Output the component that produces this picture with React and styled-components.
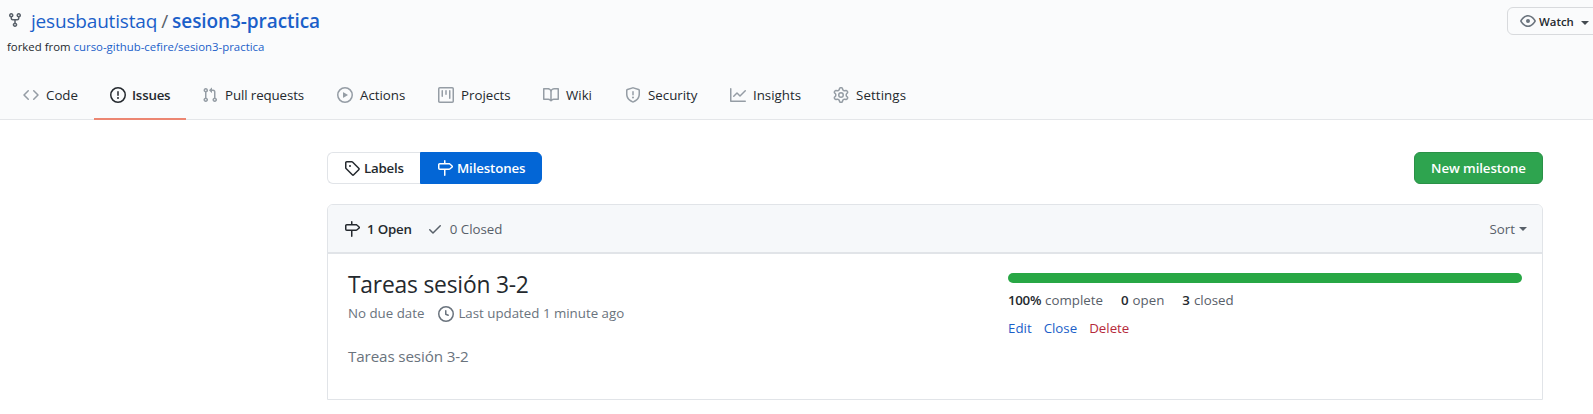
import React from "react";
import styled, { createGlobalStyle } from "styled-components";

const GlobalStyle = createGlobalStyle`
  *, *::before, *::after { box-sizing: border-box; }
  body {
    margin: 0;
    background: #fff;
    color: #24292e;
    font-family: "Open Sans", "Noto Sans", sans-serif;
    font-size: 13.3px;
    overflow: hidden;
  }
`;

const ICONS = {
  fork: "M5 3.25a.75.75 0 11-1.5 0 .75.75 0 011.5 0zm0 2.122a2.25 2.25 0 10-1.5 0v.878A2.25 2.25 0 005.75 8.5h1.5v2.128a2.251 2.251 0 101.5 0V8.5h1.5a2.25 2.25 0 002.25-2.25v-.878a2.25 2.25 0 10-1.5 0v.878a.75.75 0 01-.75.75h-4.5A.75.75 0 015 6.25v-.878zm3.75 7.378a.75.75 0 11-1.5 0 .75.75 0 011.5 0zm3-8.75a.75.75 0 100-1.5.75.75 0 000 1.5z",
  code: "M4.72 3.22a.75.75 0 011.06 1.06L2.06 8l3.72 3.72a.75.75 0 11-1.06 1.06L.47 8.53a.75.75 0 010-1.06l4.25-4.25zm6.56 0a.75.75 0 10-1.06 1.06L13.94 8l-3.72 3.72a.75.75 0 101.06 1.06l4.25-4.25a.75.75 0 000-1.06l-4.25-4.25z",
  issue: "M8 1.5a6.5 6.5 0 100 13 6.5 6.5 0 000-13zM0 8a8 8 0 1116 0A8 8 0 010 8zm9 3a1 1 0 11-2 0 1 1 0 012 0zm-.25-6.25a.75.75 0 00-1.5 0v3.5a.75.75 0 001.5 0v-3.5z",
  pull: "M7.177 3.073L9.573.677A.25.25 0 0110 .854v4.792a.25.25 0 01-.427.177L7.177 3.427a.25.25 0 010-.354zM3.75 2.5a.75.75 0 100 1.5.75.75 0 000-1.5zm-2.25.75a2.25 2.25 0 113 2.122v5.256a2.251 2.251 0 11-1.5 0V5.372A2.25 2.25 0 011.5 3.25zM11 2.5h-1V4h1a1 1 0 011 1v5.628a2.251 2.251 0 101.5 0V5A2.5 2.5 0 0011 2.5zm1 10.25a.75.75 0 111.5 0 .75.75 0 01-1.5 0zM3.75 12a.75.75 0 100 1.5.75.75 0 000-1.5z",
  play: "M1.5 8a6.5 6.5 0 1113 0 6.5 6.5 0 01-13 0zM8 0a8 8 0 100 16A8 8 0 008 0zM6.379 5.227A.25.25 0 006 5.442v5.117a.25.25 0 00.379.214l4.264-2.559a.25.25 0 000-.428L6.379 5.227z",
  project: "M1.75 0A1.75 1.75 0 000 1.75v12.5C0 15.216.784 16 1.75 16h12.5A1.75 1.75 0 0016 14.25V1.75A1.75 1.75 0 0014.25 0H1.75zM1.5 1.75a.25.25 0 01.25-.25h12.5a.25.25 0 01.25.25v12.5a.25.25 0 01-.25.25H1.75a.25.25 0 01-.25-.25V1.75zM11.75 3a.75.75 0 00-.75.75v7.5a.75.75 0 001.5 0v-7.5a.75.75 0 00-.75-.75zm-8.25.75a.75.75 0 011.5 0v5.5a.75.75 0 01-1.5 0v-5.5zM8 3a.75.75 0 00-.75.75v3.5a.75.75 0 001.5 0v-3.5A.75.75 0 008 3z",
  book: "M0 1.75A.75.75 0 01.75 1h4.253c1.227 0 2.317.59 3 1.501A3.744 3.744 0 0111.006 1h4.245a.75.75 0 01.75.75v10.5a.75.75 0 01-.75.75h-4.507a2.25 2.25 0 00-1.591.659l-.622.621a.75.75 0 01-1.06 0l-.622-.621A2.25 2.25 0 005.258 13H.75a.75.75 0 01-.75-.75V1.75zm8.755 3a2.25 2.25 0 012.25-2.25H14.5v9h-3.757c-.71 0-1.4.201-1.992.572l.004-7.322zm-1.504 7.324l.004-5.073-.002-2.253A2.25 2.25 0 005.003 2.5H1.5v9h3.757a3.75 3.75 0 011.994.574z",
  shield: "M7.467.133a1.75 1.75 0 011.066 0l5.25 1.68A1.75 1.75 0 0115 3.48V7c0 1.566-.32 3.182-1.303 4.682-.983 1.498-2.585 2.813-5.032 3.855a1.7 1.7 0 01-1.33 0c-2.447-1.042-4.049-2.357-5.032-3.855C1.32 10.182 1 8.566 1 7V3.48a1.75 1.75 0 011.217-1.667l5.25-1.68zm.61 1.429a.25.25 0 00-.153 0l-5.25 1.68a.25.25 0 00-.174.238V7c0 1.358.275 2.666 1.057 3.86.784 1.194 2.121 2.34 4.366 3.297a.2.2 0 00.154 0c2.245-.956 3.582-2.104 4.366-3.298C13.225 9.666 13.5 8.36 13.5 7V3.48a.25.25 0 00-.174-.237l-5.25-1.68zM9 10.5a1 1 0 11-2 0 1 1 0 012 0zm-.25-5.75a.75.75 0 10-1.5 0v3a.75.75 0 001.5 0v-3z",
  graph: "M1.5 1.75a.75.75 0 00-1.5 0v12.5c0 .414.336.75.75.75h14.5a.75.75 0 000-1.5H1.5V1.75zm14.28 2.53a.75.75 0 00-1.06-1.06L10 7.94 7.53 5.47a.75.75 0 00-1.06 0L3.22 8.72a.75.75 0 001.06 1.06L7 7.06l2.47 2.47a.75.75 0 001.06 0l5.25-5.25z",
  gear: "M7.429 1.525a6.593 6.593 0 011.142 0c.036.003.108.036.137.146l.289 1.105c.147.56.55.967.997 1.189.174.086.341.183.501.29.417.278.97.423 1.53.27l1.102-.303c.11-.03.175.016.195.046.219.31.41.641.573.989.014.031.022.11-.059.19l-.815.806c-.411.406-.562.957-.53 1.456a4.588 4.588 0 010 .582c-.032.499.119 1.05.53 1.456l.815.806c.08.08.073.159.059.19a6.494 6.494 0 01-.573.99c-.02.029-.086.074-.195.045l-1.103-.303c-.559-.153-1.112-.008-1.529.27-.16.107-.327.204-.5.29-.449.222-.851.628-.998 1.189l-.289 1.105c-.029.11-.101.143-.137.146a6.613 6.613 0 01-1.142 0c-.036-.003-.108-.037-.137-.146l-.289-1.105c-.147-.56-.55-.967-.997-1.189a4.502 4.502 0 01-.501-.29c-.417-.278-.97-.423-1.53-.27l-1.102.303c-.11.03-.175-.016-.195-.046a6.492 6.492 0 01-.573-.989c-.014-.031-.022-.11.059-.19l.815-.806c.411-.406.562-.957.53-1.456a4.587 4.587 0 010-.582c.032-.499-.119-1.05-.53-1.456l-.815-.806c-.08-.08-.073-.159-.059-.19a6.44 6.44 0 01.573-.99c.02-.029.086-.075.195-.045l1.103.303c.559.153 1.112.008 1.529-.27.16-.107.327-.204.5-.29.449-.222.851-.628.998-1.189l.289-1.105c.029-.11.101-.143.137-.146zM8 0c-.236 0-.47.01-.701.03-.743.065-1.29.615-1.458 1.261l-.29 1.106c-.017.066-.078.158-.211.224a5.994 5.994 0 00-.668.386c-.123.082-.233.09-.3.071L3.27 2.776c-.644-.177-1.392.02-1.82.63a7.977 7.977 0 00-.704 1.217c-.315.675-.111 1.422.363 1.891l.815.806c.05.048.098.147.088.294a6.084 6.084 0 000 .772c.01.147-.038.246-.088.294l-.815.806c-.474.469-.678 1.216-.363 1.891.2.428.436.835.704 1.218.428.609 1.176.806 1.82.63l1.103-.303c.066-.019.176-.011.299.071.213.143.436.272.668.386.133.066.194.158.212.224l.289 1.106c.169.646.715 1.196 1.458 1.26a8.094 8.094 0 001.402 0c.743-.064 1.29-.614 1.458-1.26l.29-1.106c.017-.066.078-.158.211-.224a5.98 5.98 0 00.668-.386c.123-.082.233-.09.3-.071l1.102.302c.644.177 1.392-.02 1.82-.63.268-.382.505-.789.704-1.217.315-.675.111-1.422-.364-1.891l-.814-.806c-.05-.048-.098-.147-.088-.294a6.1 6.1 0 000-.772c-.01-.147.039-.246.088-.294l.814-.806c.475-.469.679-1.216.364-1.891a7.992 7.992 0 00-.704-1.218c-.428-.609-1.176-.806-1.82-.63l-1.103.303c-.066.019-.176.011-.299-.071a5.991 5.991 0 00-.668-.386c-.133-.066-.194-.158-.212-.224L10.16 1.29C9.99.645 9.444.095 8.701.031A8.094 8.094 0 008 0zm1.5 8a1.5 1.5 0 11-3 0 1.5 1.5 0 013 0zM11 8a3 3 0 11-6 0 3 3 0 016 0z",
  tag: "M2.5 7.775V2.75a.25.25 0 01.25-.25h5.025a.25.25 0 01.177.073l6.25 6.25a.25.25 0 010 .354l-5.025 5.025a.25.25 0 01-.354 0l-6.25-6.25a.25.25 0 01-.073-.177zm-1.5 0V2.75C1 1.784 1.784 1 2.75 1h5.025c.464 0 .91.184 1.238.513l6.25 6.25a1.75 1.75 0 010 2.474l-5.026 5.026a1.75 1.75 0 01-2.474 0l-6.25-6.25A1.75 1.75 0 011 7.775zM6 5a1 1 0 100 2 1 1 0 000-2z",
  milestone: "M7.75 0a.75.75 0 01.75.75V3h3.634c.414 0 .814.147 1.13.414l2.07 1.75a1.75 1.75 0 010 2.672l-2.07 1.75a1.75 1.75 0 01-1.13.414H8.5v5.25a.75.75 0 11-1.5 0V10H2.75A1.75 1.75 0 011 8.25v-3.5C1 3.784 1.784 3 2.75 3H7V.75A.75.75 0 017.75 0zm0 8.5h4.384a.25.25 0 00.161-.06l2.07-1.75a.25.25 0 000-.38l-2.07-1.75a.25.25 0 00-.161-.06H2.75a.25.25 0 00-.25.25v3.5c0 .138.112.25.25.25h5z",
  check: "M13.78 4.22a.75.75 0 010 1.06l-7.25 7.25a.75.75 0 01-1.06 0L2.22 9.28a.75.75 0 011.06-1.06L6 10.94l6.72-6.72a.75.75 0 011.06 0z",
  clock: "M1.5 8a6.5 6.5 0 1113 0 6.5 6.5 0 01-13 0zM8 0a8 8 0 100 16A8 8 0 008 0zm.5 4.75a.75.75 0 00-1.5 0v3.5a.75.75 0 00.471.696l2.5 1a.75.75 0 00.557-1.392L8.5 7.742V4.75z",
  eye: "M1.679 7.932c.412-.621 1.242-1.75 2.366-2.717C5.175 4.242 6.527 3.5 8 3.5c1.473 0 2.824.742 3.955 1.715 1.124.967 1.954 2.096 2.366 2.717a.119.119 0 010 .136c-.412.621-1.242 1.75-2.366 2.717C10.825 11.758 9.473 12.5 8 12.5c-1.473 0-2.824-.742-3.955-1.715C2.92 9.818 2.09 8.69 1.679 8.068a.119.119 0 010-.136zM8 2c-1.981 0-3.67.992-4.933 2.078C1.797 5.169.88 6.423.43 7.1a1.619 1.619 0 000 1.798c.45.678 1.367 1.932 2.637 3.024C4.329 13.008 6.019 14 8 14c1.981 0 3.67-.992 4.933-2.078 1.27-1.091 2.187-2.345 2.637-3.023a1.619 1.619 0 000-1.798c-.45-.678-1.367-1.932-2.637-3.023C11.671 2.992 9.981 2 8 2zm0 8a2 2 0 100-4 2 2 0 000 4z",
};

const Svg = styled.svg`
  flex: none;
  width: 16px;
  height: 16px;
  fill: ${(p) => p.$color || "currentColor"};
`;

const Icon = ({ name, color }) => (
  <Svg viewBox="0 0 16 16" $color={color} aria-hidden="true">
    <path fillRule="evenodd" d={ICONS[name]} />
  </Svg>
);

/* $track is the letter spacing, in px */
const Text = styled.span`
  white-space: nowrap;
  letter-spacing: ${(p) => p.$track || 0}px;
  font-weight: ${(p) => (p.$strong ? 600 : 400)};
`;

const Link = styled(Text).attrs({ as: "a" })`
  color: ${(p) => (p.$danger ? "#b5293a" : "#1b5fc9")};
  text-decoration: none;
`;

const Caret = styled.i`
  width: 0;
  height: 0;
  border: 4px solid transparent;
  border-top-color: currentColor;
  border-bottom-width: 0;
`;

const Header = styled.header`
  height: 120px;
  padding-top: 6px;
  background: #fafbfc;
  box-shadow: inset 0 -1px #e4e6e9;
`;

const HeaderTop = styled.div`
  display: flex;
  justify-content: space-between;
  height: 65px;
  padding-left: 7px;
`;

const RepoTitle = styled.h1`
  display: flex;
  align-items: center;
  height: 30px;
  margin: 0;
  font-size: 19px;
  line-height: 30px;
  svg { margin: 0 8px 3px 0; }
`;

const Slash = styled.span`
  margin: 0 4px;
  color: #586069;
  font-weight: 400;
`;

const ForkNote = styled.div`
  display: flex;
  gap: 3px;
  margin-top: 2px;
  font-size: 11.4px;
  line-height: 18px;
`;

const WatchButton = styled.button`
  display: flex;
  align-items: center;
  width: 94px;
  height: 28px;
  margin: 1px -8px 0 0;
  padding: 0 0 0 12px;
  border: 1px solid #d8dadd;
  border-radius: 6px;
  background: #fafbfc;
  color: #24292e;
  font: inherit;
  font-size: 11.4px;
  span { margin: 0 7px 0 3px; }
  i { margin-top: 3px; color: #444a50; }
`;

const Nav = styled.nav`
  display: flex;
  height: 49px;
  padding-left: 7px;
`;

const Tab = styled.a`
  display: flex;
  align-items: center;
  gap: ${(p) => (p.$active ? 6 : 7)}px;
  width: ${(p) => p.$width}px;
  padding: 1px 0 0 16px;
  border-bottom: 2px solid ${(p) => (p.$active ? "#ec8672" : "transparent")};
`;

const Main = styled.main`
  width: 1216px;
  margin: 32px 0 0 327px;
`;

const Toolbar = styled.div`
  display: flex;
  justify-content: space-between;
  height: 32px;
`;

const Switcher = styled.div`
  display: flex;
`;

const Segment = styled.a`
  display: flex;
  align-items: center;
  gap: 4px;
  width: ${(p) => p.$width}px;
  padding-left: 16px;
  border: 1px solid ${(p) => (p.$active ? "#0366d6" : "#e1e4e8")};
  border-right-width: ${(p) => (p.$active ? 1 : 0)}px;
  border-radius: ${(p) => (p.$active ? "0 6px 6px 0" : "6px 0 0 6px")};
  background: ${(p) => (p.$active ? "#0366d6" : "#fff")};
  color: ${(p) => (p.$active ? "#fff" : "#24292e")};
`;

const NewButton = styled.button`
  width: 129px;
  height: 32px;
  padding: 0;
  border: 1px solid #2a9147;
  border-radius: 6px;
  background: #2ea44f;
  color: #fff;
  font: inherit;
`;

const Box = styled.section`
  height: 196px;
  margin-top: 20px;
  border: 1px solid #e1e4e8;
  border-radius: 6px 6px 0 0;
`;

const BoxHeader = styled.div`
  display: flex;
  align-items: center;
  height: 49px;
  padding: 0 15px 0 16px;
  border-bottom: 2px solid #e1e4e8;
  border-radius: 5px 5px 0 0;
  background: #f6f8fa;
  color: #586069;
`;

const State = styled.a`
  display: flex;
  align-items: center;
  gap: 7px;
  margin-right: 15px;
  color: ${(p) => (p.$active ? "#24292e" : "#586069")};
`;

const Sort = styled.a`
  display: flex;
  align-items: center;
  gap: 4px;
  margin-left: auto;
`;

const Milestone = styled.article`
  display: flex;
  justify-content: space-between;
  padding: 19px 20px 0;
  color: #6a737d;
`;

const Title = styled.h2`
  height: 24px;
  margin: 0;
  color: #24292e;
  font-size: 22.8px;
  line-height: 24px;
`;

const Meta = styled.div`
  display: flex;
  align-items: center;
  height: 20px;
  margin-top: 6px;
  svg { margin: 1px 4px 0 14px; }
`;

const Description = styled.p`
  margin: 21px 0 0;
  font-size: 15.2px;
  line-height: 24px;
`;

const Progress = styled.div`
  width: 514px;
`;

const Track = styled.div`
  height: 10px;
  border-radius: 6px;
  overflow: hidden;
  background: #e1e4e8;
`;

const Fill = styled.div`
  height: 100%;
  background: #28a745;
`;

const Stats = styled.div`
  display: flex;
  gap: 18px;
  margin-top: 7px;
  line-height: 20px;
`;

const Stat = styled.span`
  display: flex;
  gap: 4px;
  color: #586069;
  strong { color: #24292e; }
`;

const Actions = styled.div`
  display: flex;
  gap: 12px;
  margin-top: 8px;
  line-height: 20px;
`;

const TABS = [
  { icon: "code", label: "Code", width: 87 },
  { icon: "issue", label: "Issues", width: 92, active: true, track: -0.2 },
  { icon: "pull", label: "Pull requests", width: 135, track: -0.1 },
  { icon: "play", label: "Actions", width: 101 },
  { icon: "project", label: "Projects", width: 105 },
  { icon: "book", label: "Wiki", width: 82 },
  { icon: "shield", label: "Security", width: 105 },
  { icon: "graph", label: "Insights", width: 103 },
  { icon: "gear", label: "Settings", width: 105, track: 0.1 },
];

const STATS = [
  { value: "100%", label: "complete", track: -0.3 },
  { value: "0", label: "open" },
  { value: "3", label: "closed" },
];

export default function App() {
  return (
    <>
      <GlobalStyle />
      <Header>
        <HeaderTop>
          <div>
            <RepoTitle>
              <Icon name="fork" color="#586069" />
              <Link $track={-0.18}>jesusbautistaq</Link>
              <Slash>/</Slash>
              <Link $strong $track={-0.08}>sesion3-practica</Link>
            </RepoTitle>
            <ForkNote>
              <Text>forked from</Text>
              <Link>curso-github-cefire/sesion3-practica</Link>
            </ForkNote>
          </div>
          <WatchButton>
            <Icon name="eye" color="#6a737d" />
            <Text $strong>Watch</Text>
            <Caret />
          </WatchButton>
        </HeaderTop>
        <Nav>
          {TABS.map((t) => (
            <Tab key={t.label} $width={t.width} $active={t.active}>
              <Icon name={t.icon} color={t.active ? "#24292e" : "#959da5"} />
              <Text $strong={t.active} $track={t.track}>{t.label}</Text>
            </Tab>
          ))}
        </Nav>
      </Header>
      <Main>
        <Toolbar>
          <Switcher>
            <Segment $width={93}>
              <Icon name="tag" />
              <Text $strong $track={-0.2}>Labels</Text>
            </Segment>
            <Segment $width={122} $active>
              <Icon name="milestone" />
              <Text $strong $track={-0.15}>Milestones</Text>
            </Segment>
          </Switcher>
          <NewButton>
            <Text $strong $track={-0.1}>New milestone</Text>
          </NewButton>
        </Toolbar>
        <Box>
          <BoxHeader>
            <State $active>
              <Icon name="milestone" />
              <Text $strong $track={-0.2}>1 Open</Text>
            </State>
            <State>
              <Icon name="check" />
              <Text>0 Closed</Text>
            </State>
            <Sort>
              <Text>Sort</Text>
              <Caret />
            </Sort>
          </BoxHeader>
          <Milestone>
            <div>
              <Title><Text $track={-0.2}>Tareas sesión 3-2</Text></Title>
              <Meta>
                <Text>No due date</Text>
                <Icon name="clock" />
                <Text>Last updated 1 minute ago</Text>
              </Meta>
              <Description><Text $track={-0.12}>Tareas sesión 3-2</Text></Description>
            </div>
            <Progress>
              <Track><Fill style={{ width: "100%" }} /></Track>
              <Stats>
                {STATS.map((s) => (
                  <Stat key={s.label}>
                    <Text as="strong" $strong $track={s.track}>{s.value}</Text>
                    <Text>{s.label}</Text>
                  </Stat>
                ))}
              </Stats>
              <Actions>
                <Link>Edit</Link>
                <Link>Close</Link>
                <Link $danger>Delete</Link>
              </Actions>
            </Progress>
          </Milestone>
        </Box>
      </Main>
    </>
  );
}
